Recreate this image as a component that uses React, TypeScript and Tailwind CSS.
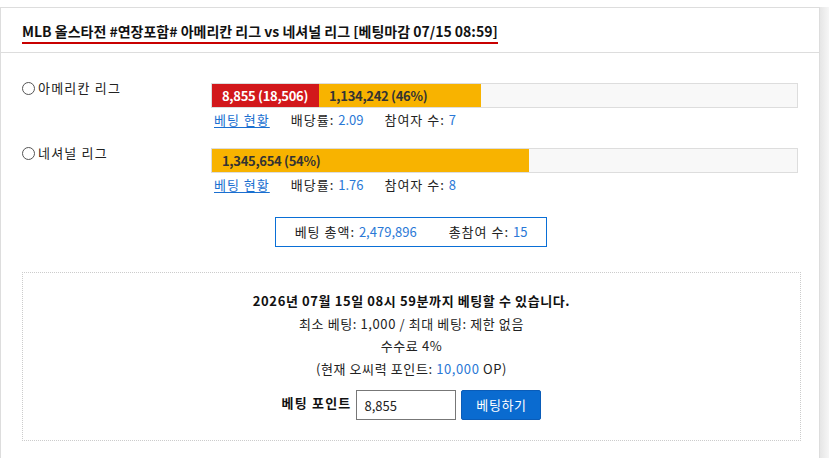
import React from "react";

type Team = {
  name: string;
  mine?: string;
  total: string;
  width: string;
  mineWidth?: string;
  rate: string;
  users: number;
};

const teams: Team[] = [
  {
    name: "아메리칸 리그",
    mine: "8,855 (18,506)",
    mineWidth: "107px",
    total: "1,134,242 (46%)",
    width: "162px",
    rate: "2.09",
    users: 7,
  },
  {
    name: "네셔널 리그",
    total: "1,345,654 (54%)",
    width: "317px",
    rate: "1.76",
    users: 8,
  },
];

function TeamRow({ team }: { team: Team }) {
  return (
    <div className="flex h-[65px]">
      <label className="mt-[-5px] flex w-[189px] shrink-0 items-start gap-[3px] tracking-[1.2px]">
        <span className="mt-[4px] h-[13px] w-[13px] rounded-full border border-[#555] bg-white" />
        <span>{team.name}</span>
      </label>
      <div className="flex w-[589px] flex-col">
        <div className="flex h-[25px] border border-[#ddd] bg-[#f8f8f8] tracking-[-0.3px]">
          {team.mine && (
            <div
              className="flex items-center bg-[#d2181b] pl-[10px] font-bold text-white"
              style={{ width: team.mineWidth }}
            >
              {team.mine}
            </div>
          )}
          <div
            className="flex items-center bg-[#f8b300] pl-[10px] font-bold text-[#333]"
            style={{ width: team.width }}
          >
            {team.total}
          </div>
        </div>
        <div className="mt-[2px] flex gap-[21px] pl-[3px] tracking-[1px]">
          <a className="text-[#1a6fd0] underline underline-offset-2">베팅 현황</a>
          <span>
            배당률: <span className="tracking-normal text-[#2a78d6]">{team.rate}</span>
          </span>
          <span>
            참여자 수: <span className="tracking-normal text-[#2a78d6]">{team.users}</span>
          </span>
        </div>
      </div>
    </div>
  );
}

export default function App() {
  return (
    <div
      className="h-[458px] w-[829px] overflow-hidden bg-white pt-[7px] text-[13px] text-[#222]"
      style={{ fontFamily: '"Noto Sans CJK KR", "Liberation Sans", sans-serif' }}
    >
      <div className="flex">
        <div className="h-[470px] w-[820px] border border-[#ddd] bg-white">
          {/* header */}
          <div className="flex h-[45px] items-end border-b border-[#ddd] pb-[8px] pl-[21px]">
            <h1 className="border-b-2 border-[#c80000] pb-[1px] text-[14px] font-bold leading-[20px] text-[#111]">
              MLB 올스타전 #연장포함# 아메리칸 리그 vs 네셔널 리그 [베팅마감 07/15 08:59]
            </h1>
          </div>

          <div className="px-[21px] pt-[30px]">
            {teams.map((t) => (
              <TeamRow key={t.name} team={t} />
            ))}

            <div className="mt-[4px] flex justify-center pl-[2px]">
              <div className="flex h-[30px] w-[272px] items-center justify-center gap-[32px] border border-[#0a6fd6] tracking-[1px]">
                <span>
                  베팅 총액: <span className="tracking-normal text-[#2a78d6]">2,479,896</span>
                </span>
                <span>
                  총참여 수: <span className="tracking-normal text-[#2a78d6]">15</span>
                </span>
              </div>
            </div>

            <div className="mt-[25px] flex h-[169px] w-[779px] flex-col items-center border border-dotted border-[#ccc] pt-[17px] leading-[22.5px] tracking-[0.6px]">
              <p className="font-bold text-[#111]">
                2026년 07월 15일 08시 59분까지 베팅할 수 있습니다.
              </p>
              <p>최소 베팅: 1,000 / 최대 베팅: 제한 없음</p>
              <p>수수료 4%</p>
              <p>
                (현재 오씨력 포인트: <span className="text-[#2a78d6]">10,000</span> OP)
              </p>
              <div className="mt-[10px] flex items-start gap-[5px]">
                <span className="pt-[2px] font-bold tracking-[1.2px] text-[#111]">베팅 포인트</span>
                <input
                  defaultValue="8,855"
                  className="h-[30px] w-[100px] border border-[#777] px-[7px] text-[13px] tracking-normal outline-none"
                />
                <button className="h-[30px] w-[80px] rounded-[2px] border border-[#0a5cb8] bg-[#0a6bd0] text-white">
                  베팅하기
                </button>
              </div>
            </div>
          </div>
        </div>
        <div className="h-[458px] w-[9px] bg-gradient-to-r from-[#e6e6e6] to-[#f6f6f6]" />
      </div>
    </div>
  );
}
